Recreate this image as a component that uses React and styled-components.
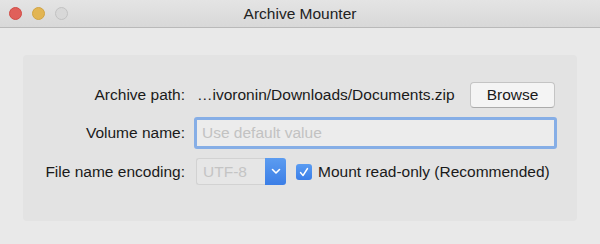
import React from "react";
import styled, { createGlobalStyle } from "styled-components";

const Global = createGlobalStyle`
  html, body { margin: 0; padding: 0; }
  body {
    width: 600px; height: 244px; overflow: hidden;
    background: #e9e9e9;
    font-family: "Liberation Sans", Arial, sans-serif;
    color: #1a1a1a;
  }
`;

const Window = styled.div`
  width: 600px; height: 244px;
  display: flex; flex-direction: column;
  background: #e9e9e9;
`;

const TitleBar = styled.div`
  height: 28px;
  box-sizing: border-box;
  position: relative;
  display: flex; align-items: center; justify-content: center;
  background: linear-gradient(#e4e4e4, #d8d8d8);
  border-bottom: 1px solid #b9b9b9;
  font-size: 15.5px;
  color: #222;
`;

const Lights = styled.div`
  position: absolute; left: 9px; top: 7px;
  display: flex; gap: 10px;
`;

const Light = styled.span`
  width: 13px; height: 13px; border-radius: 50%;
  box-sizing: border-box;
  background: ${p => p.$c};
  border: 1px solid ${p => p.$b};
`;

const Content = styled.div`
  flex: 1;
  padding: 27px 23px 23px 23px;
`;

const Panel = styled.div`
  height: 166px;
  box-sizing: border-box;
  background: #e3e3e3;
  border-radius: 4px;
  padding: 27px 20px 0 0;
  display: grid;
  grid-template-columns: 162px 1fr;
  grid-template-rows: 26px 32px 27px;
  column-gap: 10px;
  row-gap: 9px;
  align-items: center;
`;

const Label = styled.div`
  text-align: right;
  font-size: 15.5px;
  color: #1a1a1a;
`;

const Row = styled.div`
  display: flex; align-items: center;
  height: 100%;
`;

const PathText = styled.div`
  flex: 1;
  font-size: 15.5px;
  padding-left: 2px;
  white-space: nowrap;
`;

const Button = styled.button`
  width: 85px; height: 26px;
  margin-right: 2px;
  font-family: inherit; font-size: 15.5px;
  background: #f4f4f4;
  border: 1px solid #c4c4c4;
  border-bottom-color: #ababab;
  border-radius: 4px;
  color: #1a1a1a;
  padding: 0;
`;

const Input = styled.div`
  flex: 1;
  height: 32px;
  box-sizing: border-box;
  background: #ececec;
  border: 3px solid #86aee6;
  border-radius: 3px;
  display: flex; align-items: center;
  padding-left: 5px;
  font-size: 15.5px;
  color: #c2c2c2;
  margin-left: -1px;
`;

const Select = styled.div`
  width: 90px; height: 27px;
  display: flex;
  margin-left: 1px;
`;

const SelectText = styled.div`
  flex: 1;
  box-sizing: border-box;
  border: 1px solid #d2d2d2;
  border-right: none;
  border-radius: 3px 0 0 3px;
  background: #e6e6e6;
  display: flex; align-items: center;
  padding-left: 6px;
  font-size: 15.5px;
  color: #c4c4c4;
`;

const SelectArrow = styled.div`
  width: 21px;
  background: linear-gradient(#5c9cf0, #3b7ee6);
  border-radius: 0 3px 3px 0;
  display: flex; align-items: center; justify-content: center;
`;

const Check = styled.div`
  width: 16px; height: 16px;
  box-sizing: border-box;
  margin-left: 10px;
  border-radius: 3px;
  background: linear-gradient(#5a9cf2, #3a7ee8);
  display: flex; align-items: center; justify-content: center;
`;

const CheckLabel = styled.div`
  margin-left: 6px;
  font-size: 15.5px;
  white-space: nowrap;
`;

export default function App() {
  return (
    <Window>
      <Global />
      <TitleBar>
        <Lights>
          <Light $c="#e0605a" $b="#d14b45" />
          <Light $c="#e2b553" $b="#d1a443" />
          <Light $c="#d8d8d8" $b="#c2c2c2" />
        </Lights>
        Archive Mounter
      </TitleBar>
      <Content>
        <Panel>
          <Label>Archive path:</Label>
          <Row>
            <PathText>…ivoronin/Downloads/Documents.zip</PathText>
            <Button>Browse</Button>
          </Row>
          <Label>Volume name:</Label>
          <Row>
            <Input>Use default value</Input>
          </Row>
          <Label>File name encoding:</Label>
          <Row>
            <Select>
              <SelectText>UTF-8</SelectText>
              <SelectArrow>
                <svg width="10" height="7" viewBox="0 0 10 7">
                  <path d="M1.5 1.5 L5 5 L8.5 1.5" fill="none" stroke="#fff" strokeWidth="1.6" strokeLinecap="round" strokeLinejoin="round" />
                </svg>
              </SelectArrow>
            </Select>
            <Check>
              <svg width="12" height="12" viewBox="0 0 12 12">
                <path d="M2.5 6.5 L5 9.5 L9.5 2.5" fill="none" stroke="#fff" strokeWidth="1.4" strokeLinecap="round" strokeLinejoin="round" />
              </svg>
            </Check>
            <CheckLabel>Mount read-only (Recommended)</CheckLabel>
          </Row>
        </Panel>
      </Content>
    </Window>
  );
}
